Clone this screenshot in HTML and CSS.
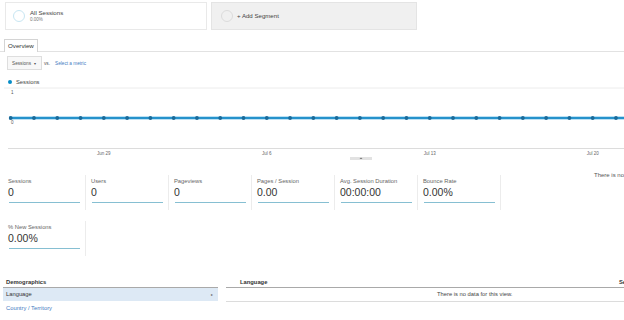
FILE: index.html
```html
<!DOCTYPE html>
<html lang="en">
<head>
    <meta charset="UTF-8">
    <title>Audience Overview</title>
    <link rel="stylesheet" href="styles.css">
</head>
<body>
    <div class="segments">
        <div class="segment">
            <span class="seg-circle"></span>
            <div>
                <div class="seg-name">All Sessions</div>
                <div class="seg-pct">0.00%</div>
            </div>
        </div>
        <div class="segment segment-add">
            <span class="seg-circle"></span>
            <div class="seg-name">+ Add Segment</div>
        </div>
    </div>

    <div class="tabs">
        <div class="tab">Overview</div>
    </div>

    <div class="controls">
        <div class="dropdown">Sessions <span class="caret">&#9662;</span></div>
        <span class="vs">vs.</span>
        <a class="link metric-link">Select a metric</a>
    </div>

    <div class="legend">
        <span class="legend-dot"></span>
        <span>Sessions</span>
    </div>

    <svg class="chart" id="chart" width="624" height="78" viewBox="0 0 624 78">
        <line x1="4" y1="2" x2="624" y2="2" stroke="#ececec" stroke-width="1"/>
        <text x="11" y="7.5" class="axis-val">1</text>
        <line x1="8" y1="62.5" x2="624" y2="62.5" stroke="#dcdcdc" stroke-width="1"/>
        <line x1="9" y1="32" x2="624" y2="32" stroke="#7cc3ea" stroke-width="3"/>
        <line x1="9" y1="32" x2="624" y2="32" stroke="#0a82c0" stroke-width="1.4"/>
        <g id="dots"></g>
        <text x="11" y="38" class="axis-val">0</text>
        <text x="103.8" y="68.5" class="axis-date">Jun 29</text>
        <text x="266.8" y="68.5" class="axis-date">Jul 6</text>
        <text x="429.7" y="68.5" class="axis-date">Jul 13</text>
        <text x="592.7" y="68.5" class="axis-date">Jul 20</text>
        <rect x="350" y="71" width="22" height="3" fill="#e2e2e2"/>
        <path d="M359.5 73 L361 71.5 L362.5 73 Z" fill="#777"/>
    </svg>

    <div class="metrics">
        <div class="tiles">
            <div class="tile">
                <div class="tile-label">Sessions</div>
                <div class="tile-value">0</div>
                <div class="tile-line"></div>
            </div>
            <div class="tile">
                <div class="tile-label">Users</div>
                <div class="tile-value">0</div>
                <div class="tile-line"></div>
            </div>
            <div class="tile">
                <div class="tile-label">Pageviews</div>
                <div class="tile-value">0</div>
                <div class="tile-line"></div>
            </div>
            <div class="tile">
                <div class="tile-label">Pages / Session</div>
                <div class="tile-value">0.00</div>
                <div class="tile-line"></div>
            </div>
            <div class="tile">
                <div class="tile-label">Avg. Session Duration</div>
                <div class="tile-value">00:00:00</div>
                <div class="tile-line"></div>
            </div>
            <div class="tile">
                <div class="tile-label">Bounce Rate</div>
                <div class="tile-value">0.00%</div>
                <div class="tile-line"></div>
            </div>
            <div class="tile">
                <div class="tile-label">% New Sessions</div>
                <div class="tile-value">0.00%</div>
                <div class="tile-line"></div>
            </div>
        </div>
        <div class="side-note">There is no data for this view.</div>
    </div>

    <div class="demo">
        <div class="demo-left">
            <div class="demo-head">Demographics</div>
            <div class="demo-row active">
                <span>Language</span>
                <span class="arrow">&#9656;</span>
            </div>
            <a class="link demo-link">Country / Territory</a>
        </div>
        <div class="demo-right">
            <div class="table-head">
                <span>Language</span>
                <span>Sessions</span>
            </div>
            <div class="table-empty">There is no data for this view.</div>
        </div>
    </div>

    <script>
        // 折れ線のドット（27日分）
        const dots = document.getElementById('dots');
        for (let i = 0; i < 27; i++) {
            const c = document.createElementNS('http://www.w3.org/2000/svg', 'circle');
            c.setAttribute('cx', (10.7 + i * 23.28).toFixed(2));
            c.setAttribute('cy', 32);
            c.setAttribute('r', 1.9);
            c.setAttribute('fill', '#1b6a98');
            dots.appendChild(c);
        }
    </script>
</body>
</html>
```

FILE: styles.css
```css
body {
    font-family: 'Liberation Sans', Arial, sans-serif;
    margin: 0;
    padding: 0;
    width: 624px;
    height: 320px;
    overflow: hidden;
    background-color: #fff;
    color: #333;
}
.link {
    color: #3f7bbf;
    text-decoration: none;
}
.segments {
    display: flex;
    gap: 4px;
    padding: 2px 0 0 5px;
}
.segment {
    box-sizing: border-box;
    width: 202px;
    height: 28px;
    border: 1px solid #e9e9e9;
    display: flex;
    align-items: center;
    gap: 5px;
    padding-left: 7px;
}
.segment-add {
    width: 206px;
    background-color: #f0f0f0;
    border-color: #e4e4e4;
    gap: 4px;
    padding-left: 9px;
}
.seg-circle {
    box-sizing: border-box;
    width: 12px;
    height: 12px;
    border: 1.5px solid #c8e6f2;
    border-radius: 50%;
}
.segment-add .seg-circle {
    border-color: #dcdcdc;
}
.seg-name {
    font-size: 6.1px;
    line-height: 8px;
    color: #444;
}
.seg-pct {
    font-size: 4.5px;
    line-height: 6px;
    color: #777;
}
.tabs {
    margin-top: 9px;
    padding-left: 4px;
    border-bottom: 1px solid #e2e2e2;
    display: flex;
}
.tab {
    font-size: 6.2px;
    line-height: 12px;
    padding: 0 3px;
    border: 1px solid #d4d4d4;
    border-bottom: none;
    background: #fff;
    margin-bottom: -1px;
    color: #333;
}
.controls {
    display: flex;
    align-items: center;
    padding-left: 7px;
    margin-top: 4px;
    font-size: 4.7px;
}
.dropdown {
    box-sizing: border-box;
    width: 35px;
    height: 14px;
    border: 1px solid #dedede;
    background: #f8f8f8;
    display: flex;
    align-items: center;
    justify-content: space-between;
    padding: 0 5px 0 4px;
    color: #555;
}
.caret {
    font-size: 4px;
    color: #555;
}
.vs {
    margin-left: 2px;
    color: #555;
}
.metric-link {
    margin-left: 5px;
}
.legend {
    display: flex;
    align-items: center;
    gap: 4px;
    margin-top: 8px;
    padding-left: 8px;
    font-size: 5.8px;
    line-height: 8px;
    color: #444;
}
.legend-dot {
    width: 4px;
    height: 4px;
    border-radius: 50%;
    background-color: #058dc7;
}
.chart {
    display: block;
}
.axis-val {
    font-size: 4.5px;
    fill: #555;
    font-family: 'Liberation Sans', Arial, sans-serif;
}
.axis-date {
    font-size: 4.5px;
    fill: #666;
    text-anchor: middle;
    font-family: 'Liberation Sans', Arial, sans-serif;
}
.metrics {
    display: flex;
    margin-top: 7px;
}
.tiles {
    display: grid;
    grid-template-columns: repeat(6, 83px);
    row-gap: 11px;
    margin-top: 4px;
    padding-left: 3px;
}
.tile {
    box-sizing: border-box;
    height: 35px;
    padding: 2px 4px 0 5px;
    border-right: 1px solid #ececec;
}
.tile-label {
    font-size: 5.8px;
    line-height: 8px;
    color: #666;
    white-space: nowrap;
}
.tile-value {
    font-size: 10.5px;
    line-height: 12px;
    margin-top: 1px;
    color: #333;
}
.tile-line {
    height: 1px;
    margin: 4px 1px 0 1px;
    background-color: #86bfd2;
}
.side-note {
    font-size: 6px;
    line-height: 8px;
    margin-left: 93px;
    white-space: nowrap;
    color: #555;
}
.demo {
    display: flex;
    gap: 8px;
    margin-top: 22px;
    padding-left: 3px;
    font-size: 5.8px;
}
.demo-left {
    width: 215px;
    flex-shrink: 0;
}
.demo-head {
    font-weight: bold;
    line-height: 9px;
    padding-left: 3px;
    border-bottom: 1px solid #a9a9a9;
    color: #333;
}
.demo-row {
    display: flex;
    justify-content: space-between;
    height: 13px;
    line-height: 13px;
    padding: 0 5px 0 3px;
    color: #333;
}
.demo-row.active {
    background-color: #dde9f5;
}
.arrow {
    font-size: 4px;
    color: #666;
}
.demo-link {
    display: block;
    line-height: 14px;
    padding-left: 3px;
}
.demo-right {
    width: 460px;
    flex-shrink: 0;
}
.table-head {
    display: grid;
    grid-template-columns: 379px 1fr;
    font-weight: bold;
    line-height: 9px;
    padding-left: 14px;
    border-bottom: 1px solid #a9a9a9;
    color: #333;
}
.table-empty {
    line-height: 13px;
    padding-left: 211px;
    border-bottom: 1px solid #dcdcdc;
    color: #444;
}
```
